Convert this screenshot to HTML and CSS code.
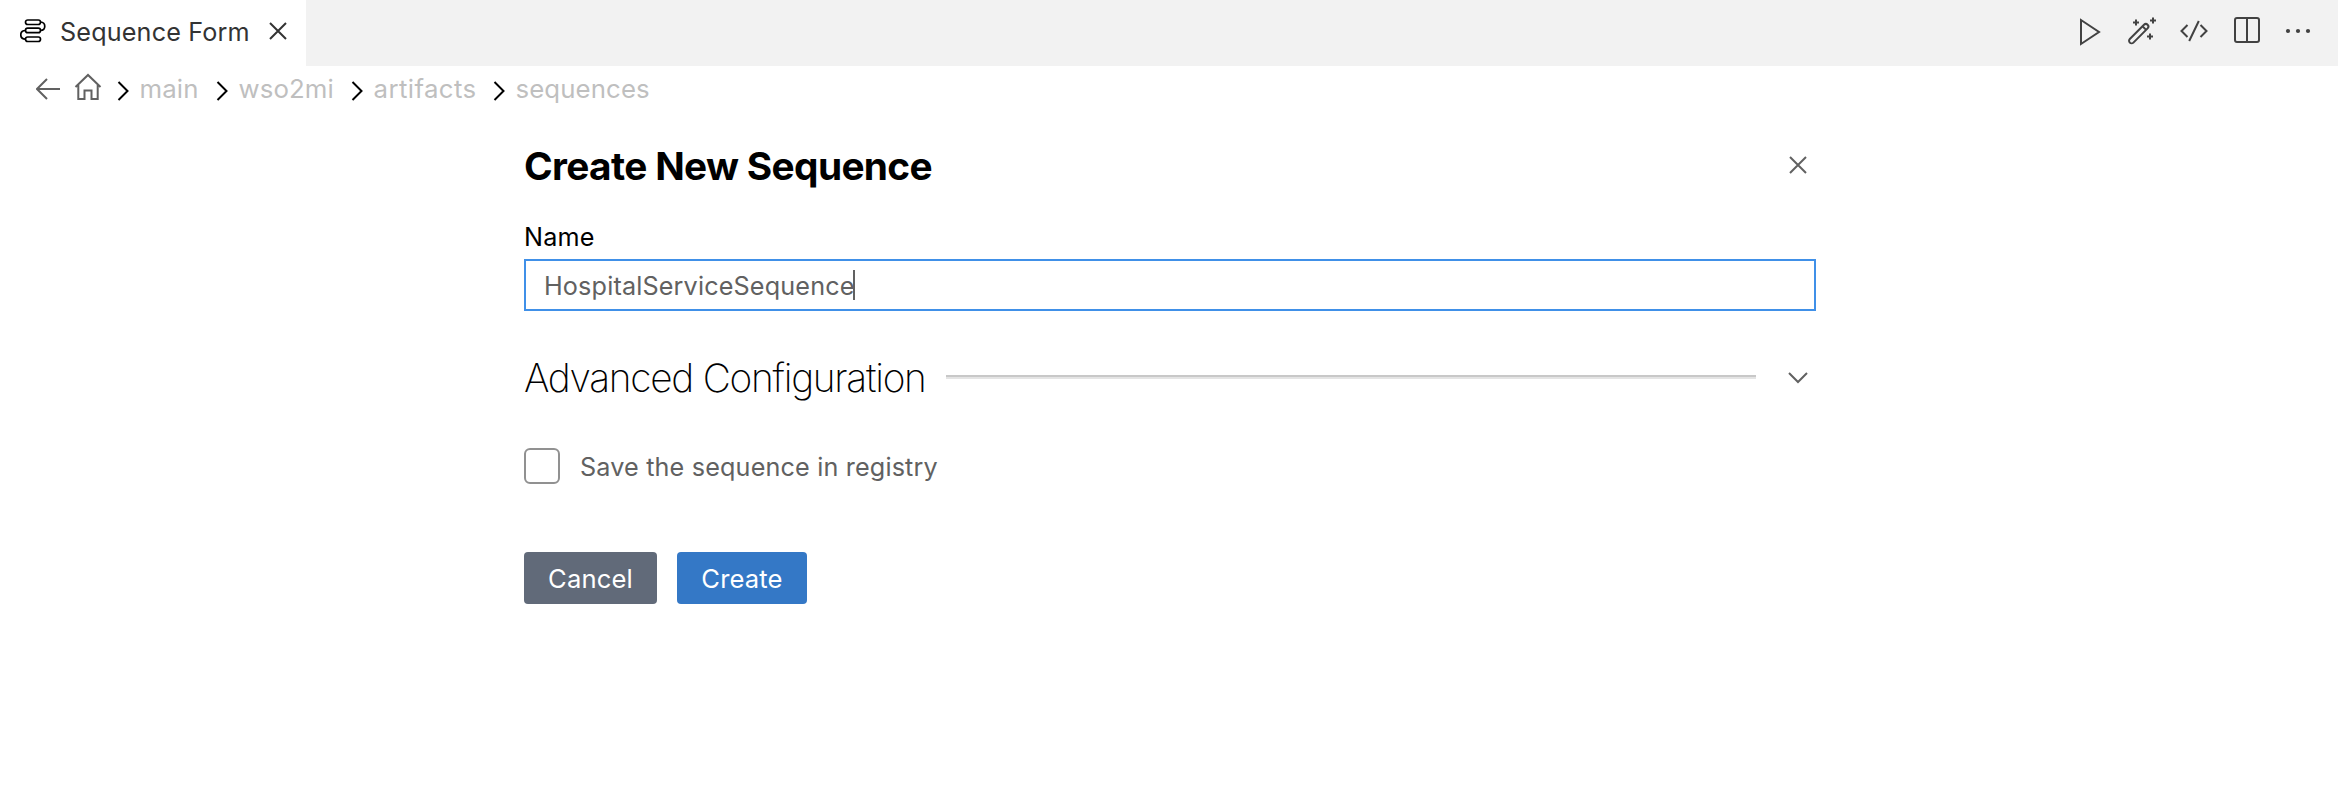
FILE: index.html
```html
<!DOCTYPE html>
<html lang="en">
<head>
<meta charset="utf-8">
<title>Sequence Form</title>
<link rel="stylesheet" href="styles.css">
</head>
<body>
<header class="tabbar">
  <div class="tab">
    <svg class="tab-icon" width="26" height="26" viewBox="0 0 26 26"><rect x="5.500" y="2" width="15" height="4.500" rx="2.250"/><rect x="5.500" y="10.200" width="15" height="4.500" rx="2.250"/><rect x="5.500" y="19" width="15" height="4.500" rx="2.250"/><path d="M20.500 4C26.200 4.300 26.200 12.200 20.500 12.500M5.500 12.500C-.8 12.700-.8 21 5.500 21.200"/></svg>
    <span class="tab-title">Sequence Form</span>
    <svg class="tab-close" width="18" height="18" viewBox="0 0 18 18"><path d="M1 1l16 16M17 1L1 17"/></svg>
  </div>
  <nav class="actions">
    <svg class="play" width="22" height="28" viewBox="0 0 22 28"><path d="M2 2v24l18-12z"/></svg>
    <svg class="wand" width="30" height="30" viewBox="0 0 30 30"><path d="M2.800 23L17 8.800a2.500 2.500 0 0 1 3.600 3.600L6.400 26.600a2.500 2.500 0 0 1-3.600-3.600zM15.500 10.300l3.600 3.600"/><path d="M9 3.500v6M6 6.500h6M26 1.500v6M23 4.500h6M23 17.500v6M20 20.500h6"/></svg>
    <svg class="code" width="28" height="24" viewBox="0 0 28 24"><path d="M7.500 6L1.500 12l6 6M20.500 6l6 6-6 6M18.800 2L9.200 22"/></svg>
    <svg class="split" width="26" height="26" viewBox="0 0 26 26"><rect x="1" y="1" width="24" height="24" rx="2"/><path d="M13 1v24"/></svg>
    <svg class="dots" width="26" height="6" viewBox="0 0 26 6"><circle cx="3" cy="3" r="2.100"/><circle cx="13" cy="3" r="2.100"/><circle cx="23" cy="3" r="2.100"/></svg>
  </nav>
</header>
<nav class="breadcrumb">
  <svg class="nav-icon" width="24" height="22" viewBox="0 0 24 22"><path d="M11 1L1 11l10 10M1 11h23"/></svg>
  <svg class="nav-icon home" width="28" height="28" viewBox="0 0 28 28"><path d="M1.500 14L14 2l12.500 12M4.300 11.500V26h6.200v-8.500h7V26h6.200V11.500"/></svg>
  <svg class="sep" width="12" height="20" viewBox="0 0 12 20"><path d="M1.500 1l9 9-9 9"/></svg>
  <span class="crumb c-main">main</span>
  <svg class="sep" width="12" height="20" viewBox="0 0 12 20"><path d="M1.500 1l9 9-9 9"/></svg>
  <span class="crumb c-project">wso2mi</span>
  <svg class="sep" width="12" height="20" viewBox="0 0 12 20"><path d="M1.500 1l9 9-9 9"/></svg>
  <span class="crumb c-artifacts">artifacts</span>
  <svg class="sep" width="12" height="20" viewBox="0 0 12 20"><path d="M1.500 1l9 9-9 9"/></svg>
  <span class="crumb c-sequences">sequences</span>
</nav>
<main class="form">
  <div class="form-head">
    <h1 class="title">Create New Sequence</h1>
    <svg class="icon" width="18" height="18" viewBox="0 0 18 18"><path d="M1 1l16 16M17 1L1 17"/></svg>
  </div>
  <div class="label">Name</div>
  <div class="field"><span class="value">HospitalServiceSequence</span><span class="caret"></span></div>
  <div class="advanced">
    <h2 class="subtitle">Advanced Configuration</h2>
    <div class="rule"></div>
    <svg class="icon" width="20" height="12" viewBox="0 0 20 12"><path d="M1 1l9 9 9-9"/></svg>
  </div>
  <div class="check-row"><span class="checkbox"></span><span class="check-label">Save the sequence in registry</span></div>
  <div class="buttons">
    <div class="button secondary">Cancel</div>
    <div class="button primary">Create</div>
  </div>
</main>
</body>
</html>
```
FILE: styles.css
```css
* { box-sizing: border-box; }
body { margin: 0; height: 796px; overflow: hidden; background: #fff; font: 400 25.2px/30px Inter, sans-serif; letter-spacing: .15px; white-space: nowrap; }
svg { display: block; flex: none; fill: none; stroke-width: 2; }
.tabbar { height: 66px; background: #f2f2f2; display: flex; justify-content: space-between; }
.tab { width: 306px; background: #fff; display: flex; align-items: center; padding: 0 0 4px 20px; }
.tab-icon { stroke: #000; stroke-width: 1.7; }
.tab-title { color: #333; width: 188px; margin: 2px 0 0 14px; }
.tab-close { stroke: #333; margin-left: 21px; }
.actions { display: flex; align-items: center; padding: 0 27px 4px 0; stroke: #424242; }
.play { margin: 1px 25.500px 0 0; }
.wand { margin: 0 23.500px 0 0; }
.code { margin: 0 26px 0 0; }
.split { margin: 0 25px 2px 0; }
.dots { fill: #424242; stroke: none; }
.breadcrumb { height: 46px; display: flex; align-items: center; padding-left: 36px; color: #bfbfbf; }
.nav-icon { stroke: #616161; }
.home { margin: -4px 0 0 14px; }
.sep { stroke: #000; margin: 3px 11px 0 14.500px; }
.crumb { flex: none; font-size: 25.8px; letter-spacing: .1px; }
.c-main { width: 61.500px; }
.c-project { width: 97.500px; }
.c-artifacts { width: 104.500px; letter-spacing: .4px; }
.form { width: 1292px; margin-left: 524px; }
.form-head { display: flex; align-items: center; justify-content: space-between; height: 100px; padding: 8px 9px 0 0; }
.form-head .icon { margin-bottom: 2px; }
.title { margin: 0; font-size: 38.8px; line-height: 48px; font-weight: 700; letter-spacing: -.65px; }
.label { margin-top: 10px; height: 37px; }
.field { height: 52px; border: 2px solid #4090e8; display: flex; align-items: center; padding-left: 18px; color: #616161; }
.value { width: 309px; padding-top: 2px; }
.caret { width: 2px; height: 30px; background: #616161; }
.advanced { height: 48px; margin-top: 43px; display: flex; align-items: center; padding-right: 8px; }
.subtitle { margin: 0; width: 422px; font-size: 38.8px; line-height: 48px; font-weight: 200; letter-spacing: -1.25px; }
.rule { width: 810px; height: 4px; margin-bottom: 2px; background: #e4e4e4; border-top: 2px solid #c8c8c8; }
.advanced .icon { margin-left: auto; }
.icon { stroke: #616161; }
.check-row { height: 36px; margin-top: 46px; display: flex; align-items: center; color: #616161; letter-spacing: .16px; }
.check-label { padding-top: 2px; }
.checkbox { width: 36px; height: 36px; border: 2px solid #919191; border-radius: 6px; margin-right: 20px; }
.buttons { display: flex; gap: 20px; margin-top: 68px; }
.button { height: 52px; padding-top: 1px; border-radius: 4px; color: #fff; display: flex; align-items: center; justify-content: center; font-size: 25.6px; letter-spacing: .15px; }
.secondary { width: 133px; background: #616a79; }
.primary { width: 130px; background: #3478c6; }
```
